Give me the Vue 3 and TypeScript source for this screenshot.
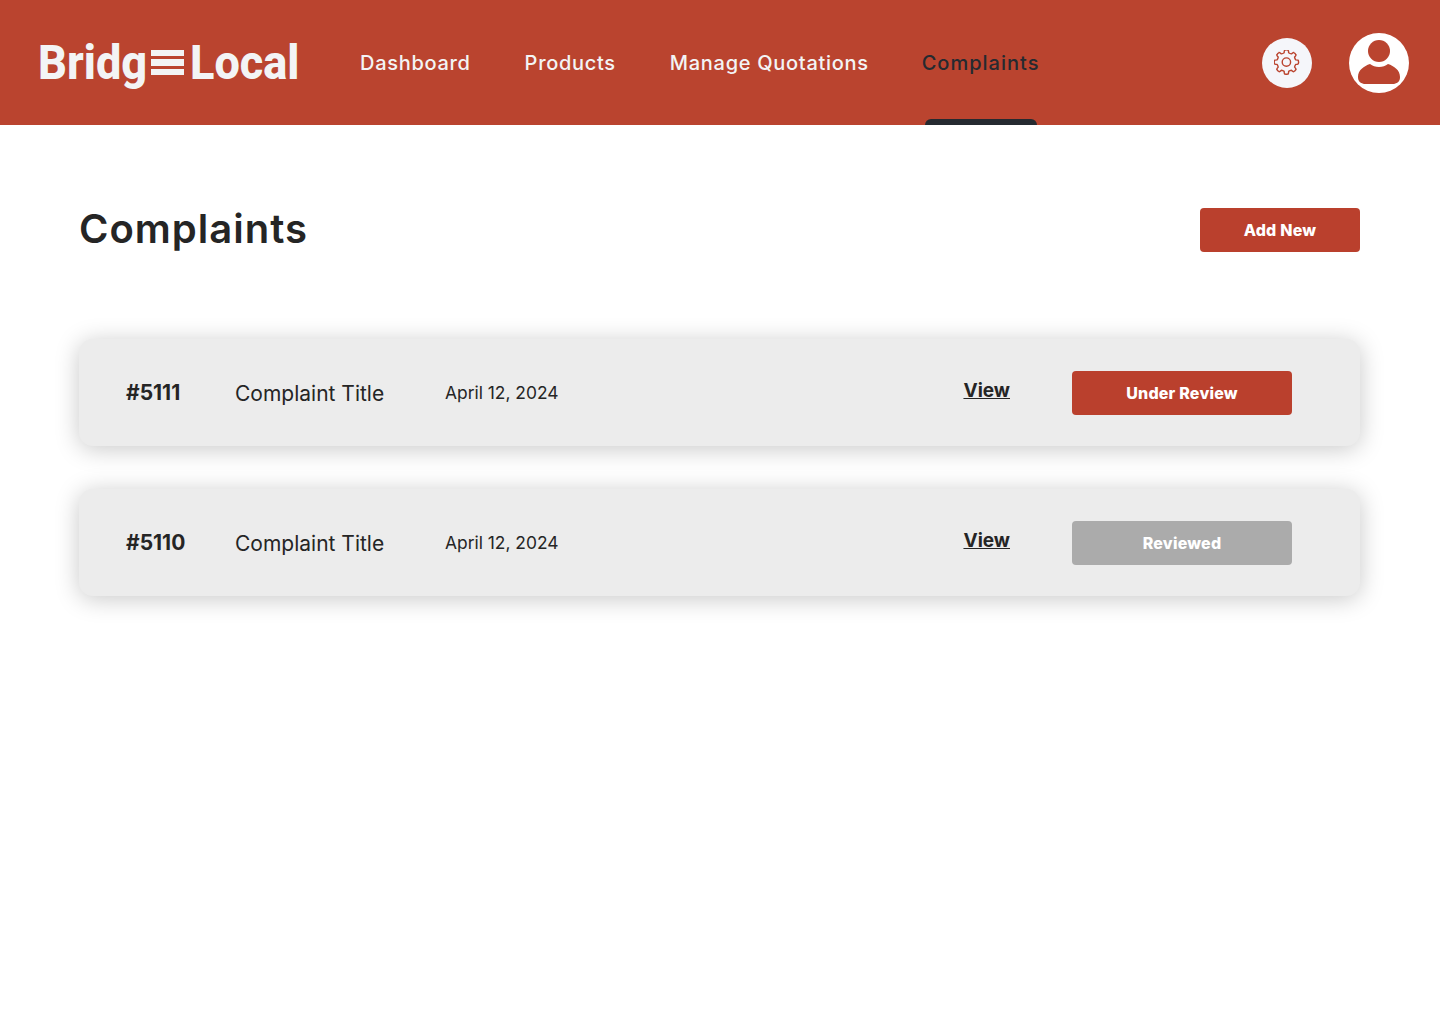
<template>
  <div class="page">
    <header class="topbar">
      <div class="logo">
        <span class="logo-word bridg">Bridg</span>
        <span class="logo-bars"><i></i><i></i><i></i></span>
        <span class="logo-word local">Local</span>
      </div>
      <nav class="nav">
        <a v-for="item in navItems" :key="item" class="nav-link" :class="{ active: item === 'Complaints' }">{{ item }}</a>
      </nav>
      <div class="actions">
        <button class="gear-btn" aria-label="Settings">
          <svg width="26" height="26" viewBox="0.6 0.9 26 26" fill="none" stroke="#ba442f" stroke-width="1.4" stroke-linejoin="round">
            <path :d="gearPath" />
            <circle cx="13" cy="13" r="4.2" />
          </svg>
        </button>
        <div class="avatar">
          <svg width="60" height="60" viewBox="0 0 60 60">
            <circle cx="30" cy="30" r="30" fill="#fff" />
            <circle cx="30" cy="18" r="11" fill="#ba442f" />
            <path d="M9 44c0-7 6-11 12-13 2.500 2 5.500 3 9 3s6.500-1 9-3c6 2 12 6 12 13 0 4-2 6-6 7H15c-4-1-6-3-6-7z" fill="#ba442f" />
          </svg>
        </div>
      </div>
    </header>

    <main class="content">
      <div class="title-row">
        <h1>Complaints</h1>
        <button class="btn add-btn">Add New</button>
      </div>
      <div class="list">
        <section v-for="row in complaints" :key="row.id" class="card">
          <span class="id">{{ row.id }}</span>
          <span class="title">Complaint Title</span>
          <span class="date">April 12, 2024</span>
          <a class="view">View</a>
          <button class="btn status" :class="{ done: row.status === 'Reviewed' }">{{ row.status }}</button>
        </section>
      </div>
    </main>
  </div>
</template>

<script setup lang="ts">
const navItems = ['Dashboard', 'Products', 'Manage Quotations', 'Complaints'];

const complaints = [
  { id: '#5111', status: 'Under Review' },
  { id: '#5110', status: 'Reviewed' },
];

// 8 tooth cog, outer and inner radius alternate round the centre
function buildGear(teeth: number, outer: number, inner: number) {
  const parts: string[] = [];
  const step = (Math.PI * 2) / teeth;
  const pt = (r: number, a: number) =>
    `${(13 + r * Math.cos(a)).toFixed(2)} ${(13 + r * Math.sin(a)).toFixed(2)}`;
  for (let i = 0; i < teeth; i++) {
    const a = i * step - Math.PI / 2;
    parts.push(`${i === 0 ? 'M' : 'L'}${pt(inner, a - step * 0.3)}`);
    parts.push(`Q${pt(outer + 0.6, a - step * 0.22)} ${pt(outer, a - step * 0.12)}`);
    parts.push(`Q${pt(outer + 0.5, a)} ${pt(outer, a + step * 0.12)}`);
    parts.push(`Q${pt(outer + 0.6, a + step * 0.22)} ${pt(inner, a + step * 0.3)}`);
    parts.push(`Q${pt(inner - 0.5, a + step * 0.5)} ${pt(inner, a + step * 0.7)}`);
  }
  return parts.join(' ') + 'Z';
}

const gearPath = buildGear(8, 12, 9.6);
</script>

<style scoped>
.page {
  min-height: 1024px;
  background: #fff;
  color: #252525;
  font-family: 'Inter', 'Liberation Sans', sans-serif;
}
.topbar {
  height: 125px;
  background: #ba442f;
  display: flex;
  align-items: center;
  padding: 0 31px 0 38px;
}
.logo {
  width: 260px;
  height: 60px;
  display: flex;
  align-items: center;
  color: #f3f4f5;
  font-family: 'Roboto', sans-serif;
  font-weight: 800;
  font-size: 49px;
  line-height: 60px;
}
.logo-word {
  display: inline-block;
  transform: scaleX(0.92);
  transform-origin: left center;
  white-space: nowrap;
}
.bridg {
  width: 113px;
}
.local {
  width: 108px;
}
.logo-bars {
  width: 33px;
  margin-right: 6px;
  display: flex;
  flex-direction: column;
  gap: 3px;
}
.logo-bars i {
  height: 6.500px;
  background: #f3f4f5;
}
.nav {
  margin-left: 62px;
  height: 125px;
  display: flex;
  gap: 54px;
}
.nav-link {
  position: relative;
  line-height: 127px;
  font-size: 20px;
  font-weight: 500;
  letter-spacing: 0.7px;
  color: #f3f4f5;
}
.nav-link.active {
  margin-left: -1px;
  color: #252a30;
  letter-spacing: 1px;
}
.nav-link.active::after {
  content: '';
  position: absolute;
  left: 3px;
  right: 2px;
  bottom: 0;
  height: 6px;
  background: #252a30;
  border-radius: 6px 6px 0 0;
}
.actions {
  margin-left: auto;
  display: flex;
  align-items: center;
  gap: 37px;
}
.gear-btn {
  width: 50px;
  height: 50px;
  padding: 0;
  border: none;
  border-radius: 50%;
  background: #f5f6fa;
  display: flex;
  align-items: center;
  justify-content: center;
}
.avatar {
  width: 60px;
  height: 60px;
}
.avatar svg {
  display: block;
}
.content {
  padding: 83px 80px 0 79px;
}
.title-row {
  height: 44px;
  display: flex;
  align-items: center;
  justify-content: space-between;
}
h1 {
  margin: 0 0 4px;
  font-size: 40px;
  font-weight: 600;
  letter-spacing: 1px;
}
.btn {
  height: 44px;
  border: none;
  border-radius: 4px;
  background: #ba402d;
  color: #fff;
  font-family: inherit;
  font-size: 16px;
  font-weight: 800;
  letter-spacing: 0.2px;
}
.add-btn {
  width: 160px;
}
.list {
  margin-top: 87px;
  display: flex;
  flex-direction: column;
  gap: 43px;
}
.card {
  height: 107px;
  padding: 0 68px 0 47px;
  background: #ececec;
  border-radius: 14px;
  box-shadow: 0 3px 24px rgba(0, 0, 0, 0.22);
  display: grid;
  grid-template-columns: 109px 210px 1fr auto 220px;
  align-items: center;
}
.id {
  font-size: 21px;
  font-weight: 700;
}
.title {
  font-size: 21px;
  font-weight: 400;
  margin-top: 1px;
}
.date {
  font-size: 17.400px;
}
.view {
  margin-right: 62px;
  margin-top: -4px;
  font-size: 19px;
  font-weight: 700;
  text-decoration: underline;
}
.status.done {
  background: #ababab;
}
</style>

<style>
html, body {
  margin: 0;
  background: #fff;
}
</style>
